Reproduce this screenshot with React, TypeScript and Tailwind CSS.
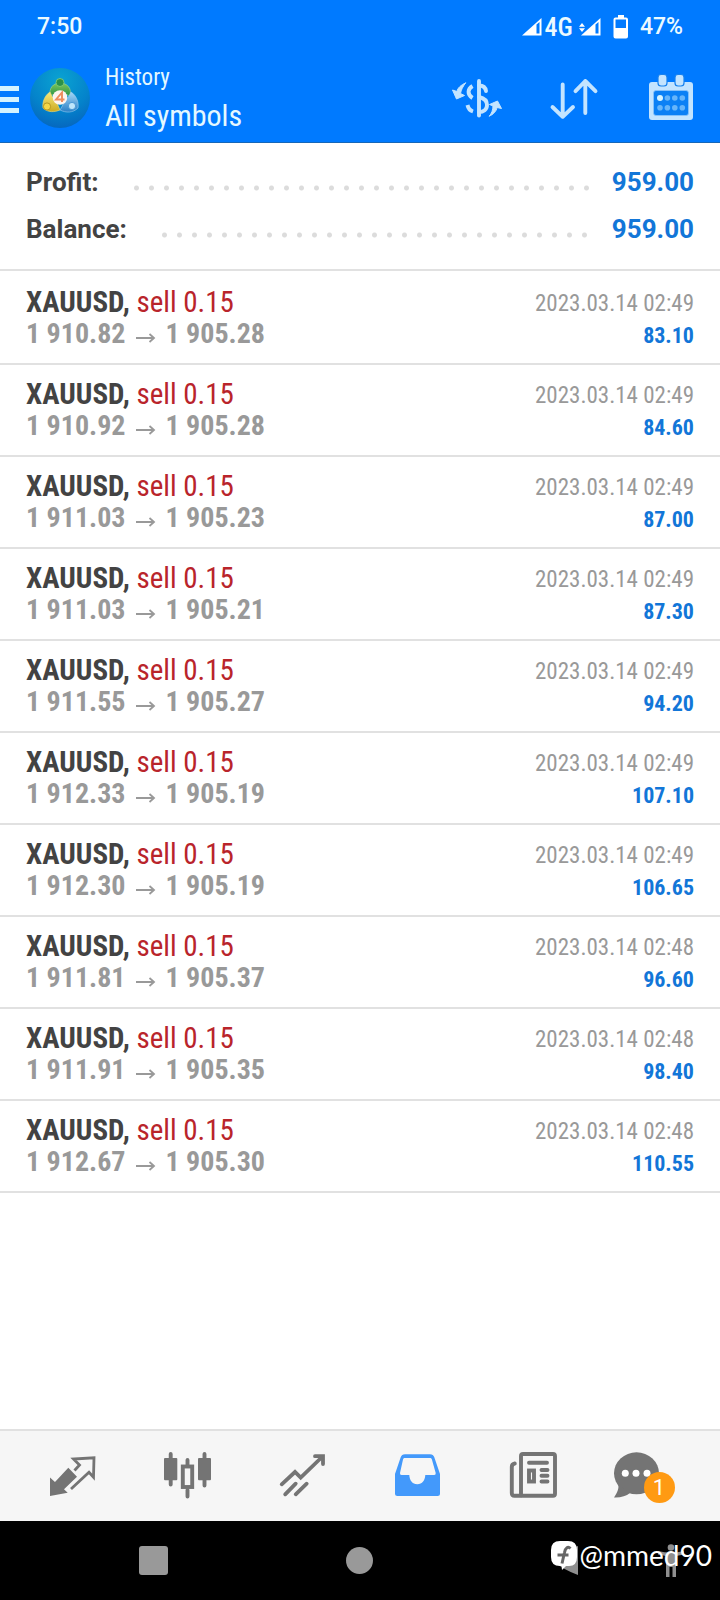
import React from "react";

type Deal = { open: string; close: string; time: string; profit: string };

const deals: Deal[] = [
  { open: "1 910.82", close: "1 905.28", time: "2023.03.14 02:49", profit: "83.10" },
  { open: "1 910.92", close: "1 905.28", time: "2023.03.14 02:49", profit: "84.60" },
  { open: "1 911.03", close: "1 905.23", time: "2023.03.14 02:49", profit: "87.00" },
  { open: "1 911.03", close: "1 905.21", time: "2023.03.14 02:49", profit: "87.30" },
  { open: "1 911.55", close: "1 905.27", time: "2023.03.14 02:49", profit: "94.20" },
  { open: "1 912.33", close: "1 905.19", time: "2023.03.14 02:49", profit: "107.10" },
  { open: "1 912.30", close: "1 905.19", time: "2023.03.14 02:49", profit: "106.65" },
  { open: "1 911.81", close: "1 905.37", time: "2023.03.14 02:48", profit: "96.60" },
  { open: "1 911.91", close: "1 905.35", time: "2023.03.14 02:48", profit: "98.40" },
  { open: "1 912.67", close: "1 905.30", time: "2023.03.14 02:48", profit: "110.55" },
];

const Signal = () => (
  <svg className="h-[18px] w-5" viewBox="0 0 20 18" fill="none">
    <path d="M0 17.5 19.5 0v17.5z" fill="#fff" />
    <path d="M14.5 6.5 17.5 4v11.5h-3z" fill="#007aff" />
  </svg>
);

const Battery = () => (
  <svg className="h-6 w-4" viewBox="0 0 16 24" fill="none">
    <path d="M5 0h6v3H5z" fill="#fff" />
    <rect x="1.5" y="3.5" width="12.5" height="19" rx="1" stroke="#fff" strokeWidth="2" />
    <path d="M1.5 13H14v9.500H1.500z" fill="#fff" />
  </svg>
);

const StatusBar = () => (
  <div className="flex h-[54px] items-center pr-[37px] pl-[37px] text-[23px] font-medium text-[#ecfaff]">
    <span className="flex-1">7:50</span>
    <Signal />
    <span className="ml-[3px] font-['Roboto_Condensed','Liberation_Sans_Narrow',sans-serif] text-[26px]">4G</span>
    <svg className="ml-[6px] h-[9px] w-[6px] self-center" viewBox="0 0 6 9" fill="#fff">
      <path d="M0 3.700 3 0l3 3.700zM0 5.300h6L3 9z" />
    </svg>
    <span className="-ml-1"><Signal /></span>
    <span className="ml-3"><Battery /></span>
    <span className="ml-[11px]">47%</span>
  </div>
);

const Logo = () => (
  <svg className="size-[60px]" viewBox="0 0 60 60">
    <defs>
      <radialGradient id="disc" cx="50%" cy="20%" r="85%">
        <stop offset="0" stopColor="#0aa3d2" />
        <stop offset="0.6" stopColor="#0483cb" />
        <stop offset="1" stopColor="#0663bd" />
      </radialGradient>
      <linearGradient id="green" x1="0" y1="0" x2="0" y2="1">
        <stop offset="0" stopColor="#7ec65a" />
        <stop offset="1" stopColor="#2a9447" />
      </linearGradient>
      <linearGradient id="yellow" x1="0" y1="0" x2="0" y2="1">
        <stop offset="0" stopColor="#f5ea7c" />
        <stop offset="1" stopColor="#cdaa1f" />
      </linearGradient>
      <linearGradient id="blue" x1="0" y1="0" x2="0" y2="1">
        <stop offset="0" stopColor="#a4d7f6" />
        <stop offset="1" stopColor="#297fc6" />
      </linearGradient>
    </defs>
    <circle cx="30" cy="30" r="30" fill="url(#disc)" />
    <path d="M20 28c-1-8 3-13 10-13s12 5 10 13l-7-3h-6z" fill="url(#green)" stroke="#a9d68a" strokeWidth="0.6" />
    <path d="M20 24c-5 3-8 10-7 16 5 5 12 4 17 2l-3-7-5-7z" fill="url(#yellow)" stroke="#e9dc80" strokeWidth="0.6" />
    <path d="M41 24c5 3 8 10 7 16-5 5-12 5-18 2l4-7 5-7z" fill="url(#blue)" stroke="#9ccdf2" strokeWidth="0.6" />
    <circle cx="30" cy="14.500" r="4" fill="#2b914a" stroke="#8bd37a" strokeWidth="0.8" />
    <circle cx="17" cy="38.500" r="3.600" fill="#f3d748" stroke="#a98b1a" strokeWidth="0.8" />
    <circle cx="42" cy="38" r="3.600" fill="#bfe6fb" stroke="#3c8fd0" strokeWidth="0.8" />
    <circle cx="30" cy="29.500" r="7.300" fill="#fdf4ee" />
    <path d="M32 34v-9.500l-6 7h8.500" fill="none" stroke="#ee8c5c" strokeWidth="1.900" />
  </svg>
);

const CurrencyIcon = () => (
  <svg className="size-[50px]" viewBox="0 0 50 50" fill="none" stroke="#c3e4ff" strokeWidth="3.900" strokeLinecap="round">
    <path d="M27 8v34.500" />
    <path d="M34 18c-.6-4-3.500-5.500-7-5.500M27 24c4.500 1 8 3.500 8 8s-3.500 7-8 7" />
    <path d="M20.500 13c-5 3-5.500 8.500 0 12M15.500 32c.7 3.500 2.500 5.500 5.500 6.500" strokeLinecap="butt" />
    <path d="M13.500 10C9 12 5.500 15 5 18.500L.5 17l4 9 8-3.500-4-2C9 17 11 13.500 13.500 10zM37.500 43c4-1.500 7-5 7.500-8.500l4.500 1L45.500 28l-8 3.500 3.500 1.500c0 4-1.500 7.500-3.500 10z" fill="#c3e4ff" strokeWidth="1" strokeLinejoin="round" />
  </svg>
);

const SortIcon = () => (
  <svg className="size-[50px]" viewBox="0 0 50 50" fill="none" stroke="#c3e4ff" strokeWidth="3.900" strokeLinecap="round" strokeLinejoin="round">
    <path d="M13.700 11.500V43.500M3.500 34l10.200 9.800L24 34M36.300 40V8M26.500 18.200 36.300 8l10.200 10.200" />
  </svg>
);

const CalendarIcon = () => (
  <svg className="size-[50px]" viewBox="0 0 50 50" fill="#c3e4ff">
    <rect x="3" y="9" width="44" height="38" rx="3" />
    <rect x="7.500" y="17.500" width="35" height="25" rx="2.500" fill="#0b80f5" stroke="#8cc5fb" strokeWidth="0.800" />
    <rect x="12" y="1.500" width="9" height="11.500" rx="3" stroke="#1681ee" strokeWidth="1.200" />
    <rect x="29" y="1.500" width="9" height="11.500" rx="3" stroke="#1681ee" strokeWidth="1.200" />
    <circle cx="14" cy="25" r="3" fill="#d8f4ff" />
    <g fill="#67b5fa">
      <circle cx="21.400" cy="25" r="2.800" /><circle cx="28.800" cy="25" r="2.800" /><circle cx="36.300" cy="25" r="2.800" />
      <circle cx="14" cy="34.700" r="2.800" /><circle cx="21.400" cy="34.700" r="2.800" /><circle cx="28.800" cy="34.700" r="2.800" /><circle cx="36.300" cy="34.700" r="2.800" />
    </g>
  </svg>
);

const Header = () => (
  <header className="border-b border-[#1767b8] bg-[#007aff]">
    <StatusBar />
    <div className="flex h-[88px] items-center pr-6 text-[#e4f8ff]">
      <button aria-label="Menu" className="flex w-[19px] flex-col gap-[6px] pt-[3px]">
        <span className="h-[5px] w-full bg-[#d4f3ff]" />
        <span className="h-[5px] w-full bg-[#d4f3ff]" />
        <span className="h-[5px] w-full bg-[#d4f3ff]" />
      </button>
      <div className="ml-[11px]"><Logo /></div>
      <div className="ml-[15px] flex-1 font-['Roboto_Condensed','Liberation_Sans_Narrow',sans-serif]">
        <p className="text-[23px] leading-[36px]">History</p>
        <h1 className="text-[30px] leading-[40px]">All symbols</h1>
      </div>
      <div className="flex gap-[47px]">
        <button aria-label="Symbol"><CurrencyIcon /></button>
        <button aria-label="Sort"><SortIcon /></button>
        <button aria-label="Period"><CalendarIcon /></button>
      </div>
    </div>
  </header>
);

const SummaryRow = ({ label, value }: { label: string; value: string }) => (
  <div className="flex h-[47px] items-center text-[26px] font-bold">
    <dt className="text-[#434343]">{label}</dt>
    <span className="mt-[10px] mr-4 ml-[30px] h-[6px] flex-1 bg-[radial-gradient(circle,#dcdcdc_2px,transparent_3px)] bg-[length:15px_6px]" />
    <dd className="text-[#1276d8]">{value}</dd>
  </div>
);

const DealRow = ({ deal }: { deal: Deal }) => (
  <li className="flex h-[92px] items-center justify-between border-b-2 border-[#e1e1e1] px-[26px] font-['Roboto_Condensed','Liberation_Sans_Narrow',sans-serif]">
    <div className="leading-[32px]">
      <p className="text-[29px] text-[#b9242b]">
        <span className="font-bold text-[#434343]">XAUUSD,</span> sell 0.15
      </p>
      <p className="flex items-center text-[28px] font-bold text-[#999]">
        {deal.open}
        <svg className="mx-[10px] mt-2 h-3 w-5" viewBox="0 0 20 12" fill="none" stroke="#999" strokeWidth="1.800" role="img" aria-label="to">
          <path d="M0 6h18M13.500 2l4.500 4-4.500 4" />
        </svg>
        {deal.close}
      </p>
    </div>
    <div className="pt-1 text-right leading-[32px]">
      <p className="text-[23px] text-[#999]">{deal.time}</p>
      <p className="text-[22px] font-bold text-[#1276d8]">{deal.profit}</p>
    </div>
  </li>
);

const QuotesIcon = () => (
  <svg className="size-12" viewBox="0 0 48 48" fill="none">
    <path d="M20.300 17.700 29 26.700 16 39.300l3.700 3.400L2 46V27.500l5 4.500z" fill="#747474" />
    <path d="M26.500 20.500l5-5.500-6-6 20.500-1.200-.5 19.500-4.500-5L23 39" stroke="#747474" strokeWidth="2.800" />
  </svg>
);

const ChartIcon = () => (
  <svg className="size-12 overflow-visible" viewBox="0 0 48 48" fill="none" stroke="#747474" strokeWidth="3.900" strokeLinecap="round">
    <path d="M7.700 4v30.500M41.500 4v31.500M24.500 10v6M24.500 40v6.500" />
    <rect x="1" y="8" width="13.300" height="22.300" rx="1" fill="#747474" stroke="none" />
    <rect x="35" y="8" width="13" height="22.300" rx="1" fill="#747474" stroke="none" />
    <rect x="19.800" y="16.500" width="9.400" height="20.500" />
  </svg>
);

const TradeIcon = () => (
  <svg className="size-12" viewBox="0 0 48 48" fill="none" stroke="#747474" strokeWidth="3.800" strokeLinecap="round">
    <path d="M3.700 34.300 17 22l5.700 5.700L44 7M37 6.200h8v7.800M7.200 44.300l10.500-10.600M17.700 44.300l11-10.600" />
  </svg>
);

const HistoryIcon = () => (
  <svg className="size-12" viewBox="0 0 48 48" fill="#4399fb" fillRule="evenodd">
    <path d="M12 4.300h25c2.400 0 3.500 1 4.300 3L47 24v19.500q0 2.500-2.500 2.500h-40Q2 46 2 43.500V24L7.700 7.300c.8-2 1.900-3 4.300-3zM11.800 8C10.800 8 10.300 8.500 10 9.500L7 23q-.3 2 1.500 2h7.800c.2 5 3 9.300 8 9.300s7.800-4.300 8-9.300h8.900q1.800 0 1.500-2L38.900 9.500C38.600 8.500 38 8 37 8z" />
  </svg>
);

const NewsIcon = () => (
  <svg className="size-12 overflow-visible" viewBox="0 0 48 48" fill="none" stroke="#747474" strokeWidth="3.900" strokeLinecap="round">
    <rect x="13" y="4" width="34" height="41.800" rx="2" />
    <path d="M6.800 13.500Q3.800 14 3.800 17v26q0 2.800 2.700 2.800H13M21 12.700h18M33.500 20h6M33.500 25.800h6M33.500 31.500h6" />
    <rect x="21" y="20.500" width="5" height="11" />
  </svg>
);

const MessagesIcon = () => (
  <span className="relative block w-[66px]">
    <svg className="size-12" viewBox="0 0 48 48" fill="#747474">
      <ellipse cx="22.500" cy="23.300" rx="22.500" ry="21" />
      <path d="M4 34c1.500 4-.8 9-4 13.500 7 .3 12-1.500 16-4.500z" />
      <g fill="#fff"><circle cx="11.300" cy="23.300" r="3.500" /><circle cx="22" cy="23.300" r="3.500" /><circle cx="33" cy="23.300" r="3.500" /></g>
    </svg>
    <span className="absolute top-[22px] left-[30px] flex size-[31px] items-center justify-center rounded-full bg-[#ff9a13] font-['Roboto',sans-serif] text-[22px] text-white">1</span>
  </span>
);

const tabs = [
  { label: "Quotes", Icon: QuotesIcon },
  { label: "Chart", Icon: ChartIcon },
  { label: "Trade", Icon: TradeIcon },
  { label: "History", Icon: HistoryIcon },
  { label: "News", Icon: NewsIcon },
  { label: "Messages", Icon: MessagesIcon },
];

const SystemBar = () => (
  <div className="relative flex h-[79px] items-center bg-black pr-[36px] pl-[139px]">
    <div className="flex flex-1 items-center justify-between">
      <button aria-label="Recent apps" className="size-[29px] rounded-[3px] bg-[#999]" />
      <button aria-label="Home" className="size-[27px] rounded-full bg-[#999]" />
      <button aria-label="Back">
        <svg className="size-[29px]" viewBox="0 0 29 29" fill="#8f8f8f"><path d="M28 0v29Q14 24 2 14.500 14 5 28 0z" /></svg>
      </button>
    </div>
    <button aria-label="Accessibility" className="ml-[79px]">
      <svg className="h-[34px] w-[26px]" viewBox="0 0 26 34" fill="#8f8f8f">
        <circle cx="13" cy="3.500" r="3.300" />
        <path d="M0 7q13 3 26 0v3.500l-8 1.500v21h-3.500V23h-3v10H8V12l-8-1.500z" />
      </svg>
    </button>
    <div className="absolute top-[17px] right-2 flex items-center gap-[3px] text-white">
      <svg className="h-[29px] w-[26px]" viewBox="0 0 26 29">
        <path d="M9 0h8q9 0 9 9v7q0 9-8 9h-3l-4 4-.5-4H9q-9 0-9-9V9q0-9 9-9z" fill="#fff" />
        <path d="M19.500 7.500c-2.500-2.500-5-1-6 4l-2.500 11M6.500 14h11" fill="none" stroke="#666" strokeWidth="3" />
      </svg>
      <span className="font-['Lato',sans-serif] text-[28px] leading-[34px]">@mmed90</span>
    </div>
  </div>
);

export default function App() {
  return (
    <div className="flex min-h-screen flex-col bg-white font-['Roboto',sans-serif]">
      <Header />
      <main className="flex-1">
        <dl className="border-b-2 border-[#e1e1e1] px-[26px] pt-4 pb-4">
          <SummaryRow label="Profit:" value="959.00" />
          <SummaryRow label="Balance:" value="959.00" />
        </dl>
        <ul className="pt-[2px]">
          {deals.map((deal, i) => <DealRow key={i} deal={deal} />)}
        </ul>
      </main>
      <nav className="grid h-[92px] grid-cols-6 items-center border-t-2 border-[#e1e1e1] bg-[#f6f6f6] pr-4 pl-[14px] pb-[5px]">
        {tabs.map(({ label, Icon }) => (
          <a key={label} href="#" aria-label={label} className="flex justify-center"><Icon /></a>
        ))}
      </nav>
      <SystemBar />
    </div>
  );
}
